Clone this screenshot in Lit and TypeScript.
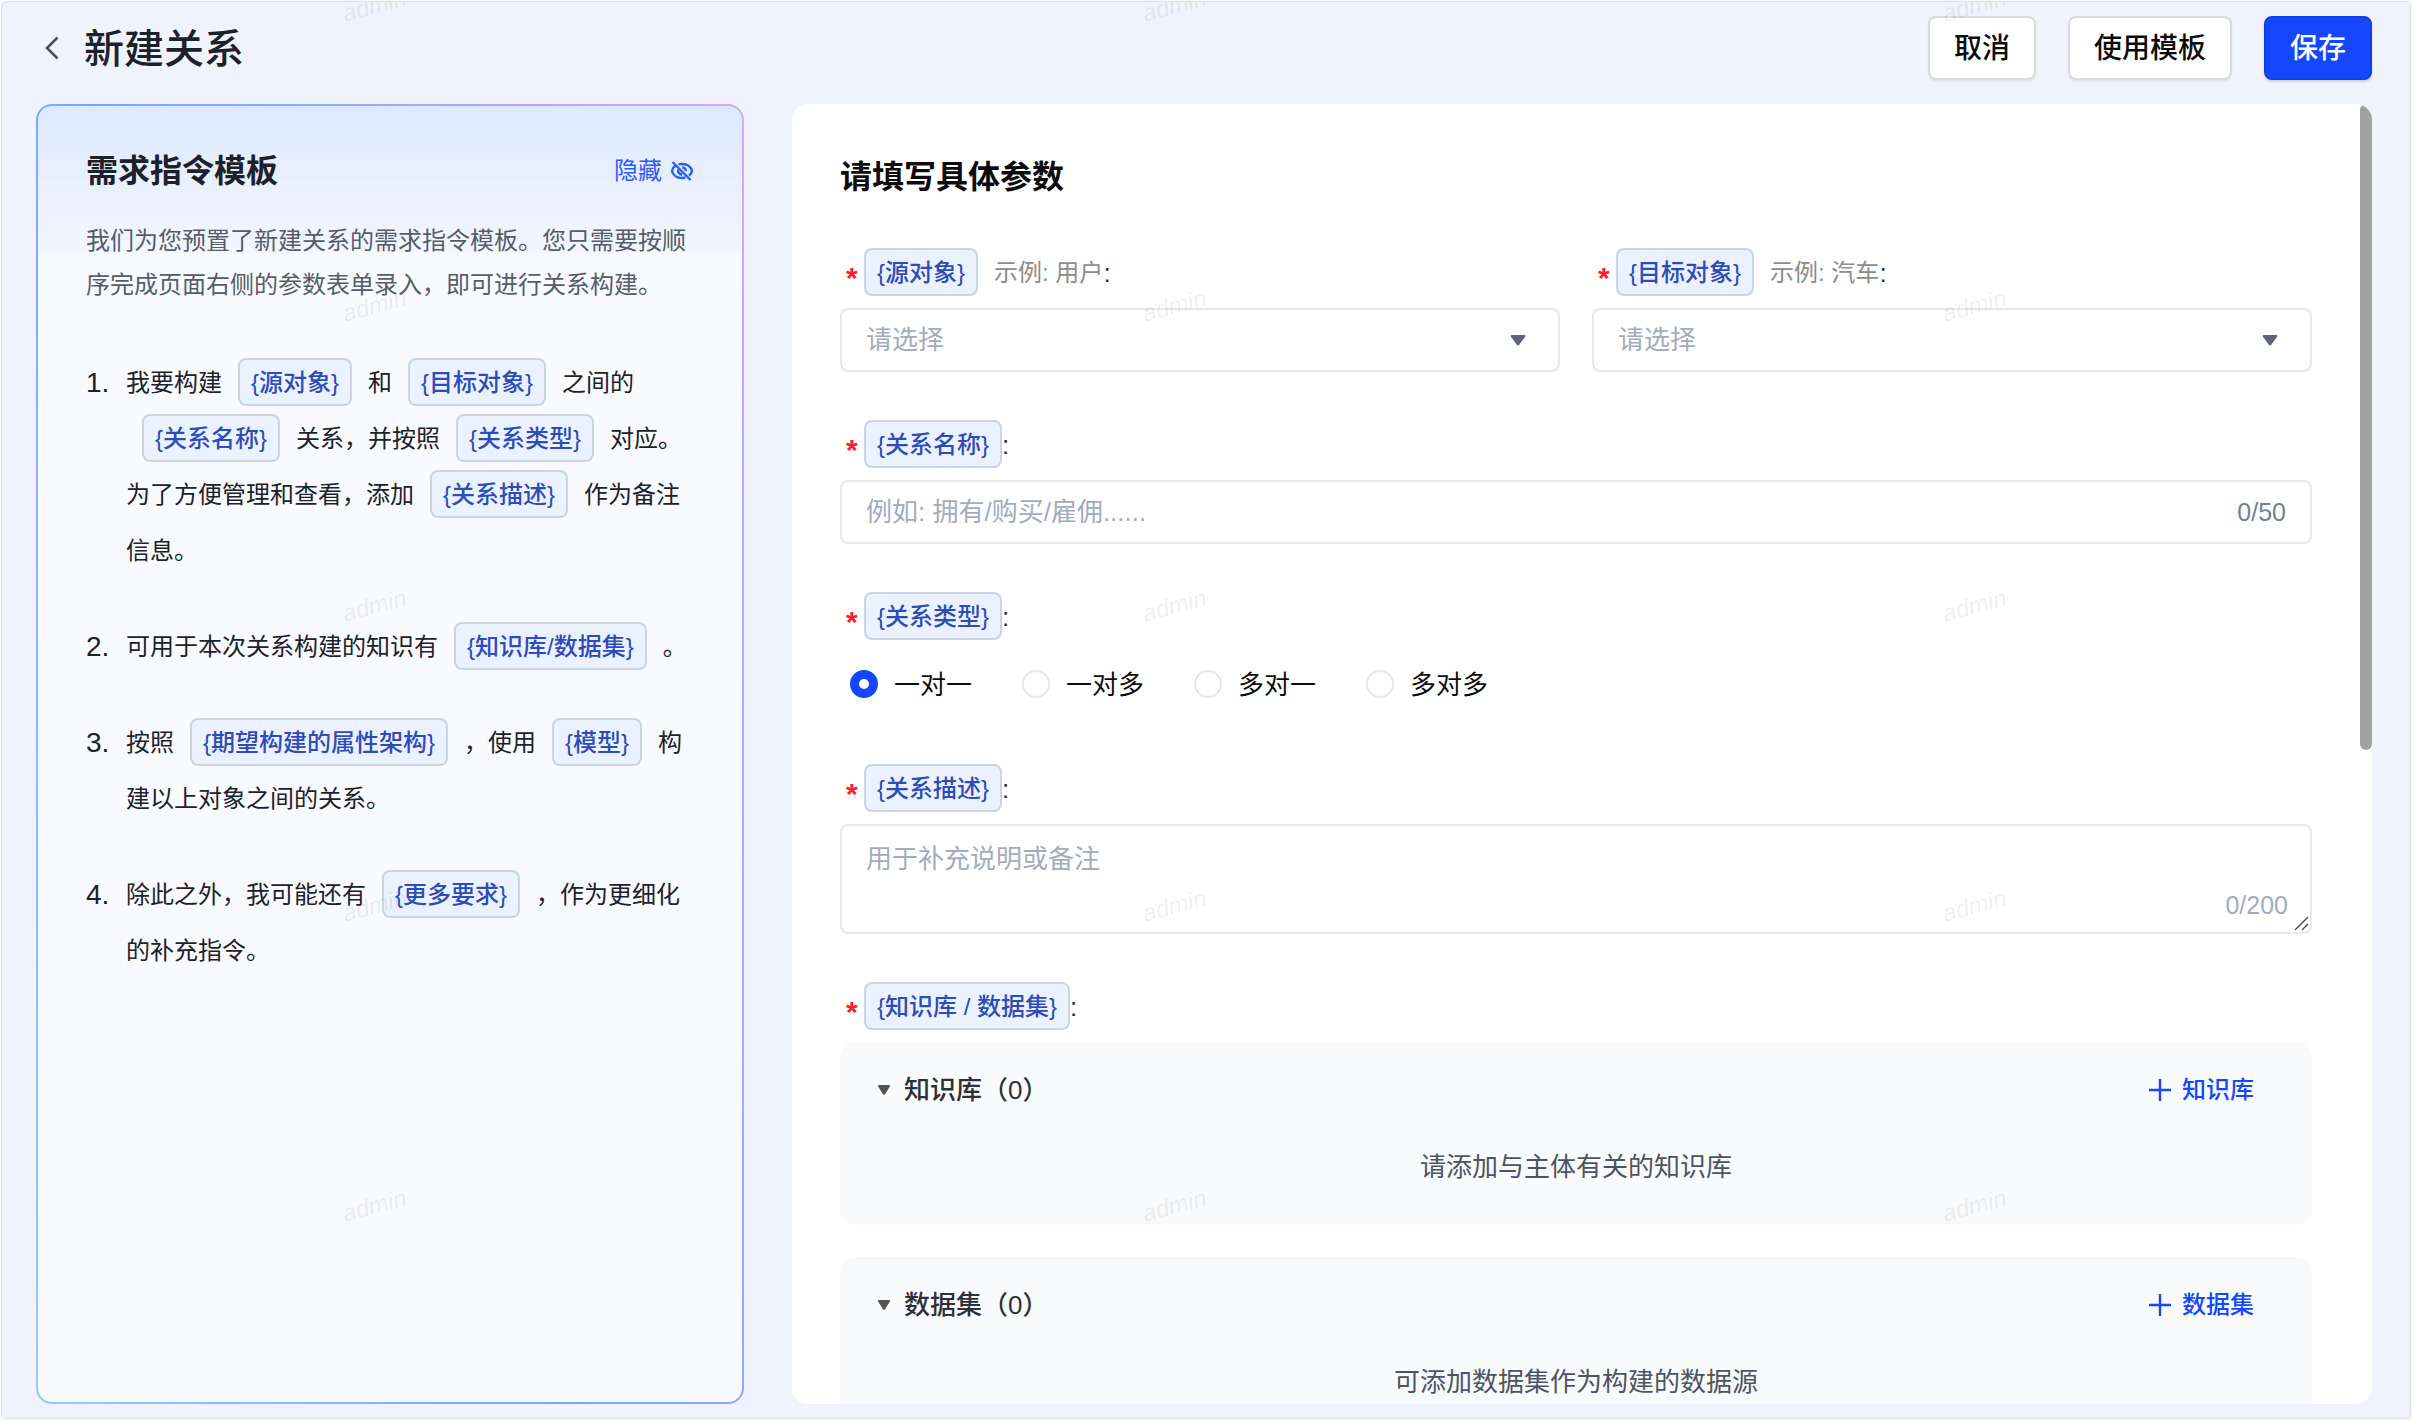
import { LitElement, html, css, svg } from "lit";
import { customElement, property, state } from "lit/decorators.js";

const baseStyles = css`
  * {
    box-sizing: border-box;
  }
  button {
    font: inherit;
    cursor: pointer;
  }
`;

/** Highlighted placeholder such as {源对象}. */
@customElement("param-tag")
export class ParamTag extends LitElement {
  static styles = css`
    :host {
      display: inline-block;
      box-sizing: border-box;
      height: 48px;
      padding: 0 11px;
      border: 2px solid #cbd5e1;
      border-radius: 8px;
      background: #eaf2ff;
      color: #2f4bb8;
      font-size: 24px;
      font-weight: 500;
      line-height: 46px;
      white-space: nowrap;
      vertical-align: top;
    }
  `;
  render() {
    return html`<slot></slot>`;
  }
}

type Part = string | { tag: string };
const t = (tag: string): Part => ({ tag });

const INSTRUCTIONS: Part[][] = [
  [
    "我要构建", t("源对象"), "和", t("目标对象"), "之间的", t("关系名称"),
    "关系，并按照", t("关系类型"), "对应。为了方便管理和查看，添加", t("关系描述"), "作为备注信息。",
  ],
  ["可用于本次关系构建的知识有", t("知识库/数据集"), "。"],
  ["按照", t("期望构建的属性架构"), "，使用", t("模型"), "构建以上对象之间的关系。"],
  ["除此之外，我可能还有", t("更多要求"), "，作为更细化的补充指令。"],
];

@customElement("template-panel")
export class TemplatePanel extends LitElement {
  static styles = [
    baseStyles,
    css`
      :host {
        display: block;
        min-width: 0;
      }
      .card {
        height: 100%;
        padding: 41px 48px 40px 48px;
        border: 2px solid transparent;
        border-radius: 16px;
        background:
          linear-gradient(180deg, #dde9fe 0, #f3f6ff 146px, #f8faff 148px, #f8faff 100%) padding-box,
          linear-gradient(70deg, #9cc5ff 0%, #74a8ff 45%, #d6a6ff 100%) border-box;
      }
      .head {
        display: flex;
        align-items: center;
        justify-content: space-between;
      }
      .title {
        margin: 0;
        font-size: 32px;
        font-weight: 600;
        line-height: 48px;
        color: #1d2129;
      }
      .hide {
        display: flex;
        align-items: center;
        gap: 8px;
        padding: 0;
        border: 0;
        background: none;
        color: #2b5cf6;
        font-size: 24px;
        line-height: 48px;
      }
      .desc {
        margin: 24px 0 48px;
        font-size: 24px;
        line-height: 44px;
        color: #565c69;
      }
      .list {
        display: flex;
        flex-direction: column;
        gap: 40px;
        margin: 0;
        padding: 0;
        list-style: none;
        color: #1d2129;
      }
      .item {
        display: grid;
        grid-template-columns: 40px minmax(0, 1fr);
        line-height: 56px;
      }
      .num {
        font-size: 28px;
      }
      .text {
        font-size: 24px;
      }
      .text param-tag {
        margin: 3px 16px 5px;
      }
    `,
  ];

  render() {
    return html`
      <section class="card">
        <div class="head">
          <h2 class="title">需求指令模板</h2>
          <button class="hide" type="button">
            隐藏
            <svg width="24" height="22" viewBox="0 0 24 22" fill="none" stroke="currentColor" stroke-width="2.4" aria-hidden="true">
              <path d="M2.5 2 20.5 20"></path>
              <path d="M5.5 5.5C3.2 7.2 2.2 9.4 2 11c.8 4 4.7 7 10 7 1.2 0 2.3-.2 3.3-.5"></path>
              <path d="M8.5 4.400c1-.3 2.2-.4 3.5-.4 5.5 0 9.2 3 10 7-.3 1.600-1.3 3.400-3 4.800"></path>
              <path d="M8.2 9.500c-.6 2.600 1 5 4 5.200"></path>
              <path d="M12.2 7.400c2.200.2 3.500 1.500 3.700 3.600"></path>
            </svg>
          </button>
        </div>
        <p class="desc">我们为您预置了新建关系的需求指令模板。您只需要按顺序完成页面右侧的参数表单录入，即可进行关系构建。</p>
        <ol class="list">
          ${INSTRUCTIONS.map(
            (parts, i) => html`<li class="item"><span class="num">${i + 1}.</span><span class="text">${parts.map((p) =>
              typeof p === "string" ? p : html`<param-tag>{${p.tag}}</param-tag>`
            )}</span></li>`
          )}
        </ol>
      </section>
    `;
  }
}

@customElement("source-card")
export class SourceCard extends LitElement {
  @property() name = "";
  @property() empty = "";
  @property({ type: Number }) count = 0;
  @state() private open = true;

  static styles = [
    baseStyles,
    css`
      :host {
        display: block;
        border-radius: 16px;
        background: #f9fafc;
      }
      .head {
        display: flex;
        align-items: center;
        justify-content: space-between;
        height: 96px;
        padding: 0 58px 0 38px;
      }
      .toggle,
      .add {
        display: flex;
        align-items: center;
        padding: 0;
        border: 0;
        background: none;
        font-weight: 500;
        line-height: 40px;
      }
      .toggle {
        gap: 14px;
        font-size: 26px;
        color: #2e3038;
      }
      .add {
        gap: 10px;
        font-size: 24px;
        color: #1447ff;
      }
      .empty {
        margin: 0;
        padding: 9px 0 38px;
        font-size: 26px;
        line-height: 40px;
        text-align: center;
        color: #4e5361;
      }
    `,
  ];

  render() {
    return html`
      <div class="head">
        <button class="toggle" type="button" aria-expanded=${this.open ? "true" : "false"} @click=${() => (this.open = !this.open)}>
          <svg width="12" height="10" viewBox="0 0 12 10" aria-hidden="true">
            <path d="M1 0h10q1.5.3.7 1.700L7 9.300q-1 1-2 0L.3 1.700Q-.5.300 1 0z" fill="#555"></path>
          </svg>
          <span>${this.name}（${this.count}）</span>
        </button>
        <button class="add" type="button">
          <svg width="24" height="24" viewBox="0 0 24 24" stroke="currentColor" stroke-width="2.4" aria-hidden="true">
            <path d="M12 1v22M1 12h22"></path>
          </svg>
          <span>${this.name}</span>
        </button>
      </div>
      ${this.open ? html`<p class="empty">${this.empty}</p>` : ""}
    `;
  }
}

const RELATION_TYPES = ["一对一", "一对多", "多对一", "多对多"];

@customElement("param-form")
export class ParamForm extends LitElement {
  @state() private kind = RELATION_TYPES[0];
  @state() private relName = "";
  @state() private relDesc = "";

  static styles = [
    baseStyles,
    css`
      :host {
        display: block;
        position: relative;
        min-width: 0;
        min-height: 0;
        overflow: hidden;
        border-radius: 16px;
        background: #fff;
      }
      .scroll {
        height: 100%;
        padding: 48px 60px 48px 48px;
        overflow-y: auto;
        scrollbar-width: none;
      }
      .thumb {
        position: absolute;
        top: 0;
        right: 0;
        width: 12px;
        height: 646px;
        border-radius: 6px;
        background: #a2a2a2;
      }
      .title {
        margin: 0 0 46px;
        font-size: 32px;
        font-weight: 600;
        line-height: 50px;
        color: #0c0c0e;
      }
      .form {
        display: flex;
        flex-direction: column;
        gap: 48px;
      }
      .pair {
        display: grid;
        grid-template-columns: 1fr 1fr;
        gap: 32px;
      }
      .field {
        display: flex;
        flex-direction: column;
        gap: 12px;
        min-width: 0;
      }
      .label {
        display: flex;
        height: 48px;
        font-size: 26px;
        line-height: 50px;
        color: #2a2d35;
      }
      .star {
        width: 24px;
        padding: 5px 0 0 6px;
        font-size: 30px;
        font-weight: 700;
        color: #f5222d;
      }
      .hint {
        margin-left: 16px;
        font-size: 24px;
        color: #8c8c8c;
      }
      .box {
        position: relative;
        display: flex;
      }
      .control {
        width: 100%;
        height: 64px;
        margin: 0;
        padding: 0 24px;
        border: 2px solid #e5e8ee;
        border-radius: 8px;
        outline: none;
        background: #fff;
        color: #1d2129;
        font: inherit;
        font-size: 26px;
        line-height: 40px;
        appearance: none;
      }
      select.control {
        color: #a5abba;
      }
      .control::placeholder {
        color: #a5abba;
        opacity: 1;
      }
      textarea.control {
        display: block;
        height: 110px;
        padding: 13px 24px 11px;
        resize: none;
      }
      .caret {
        position: absolute;
        top: 27px;
        right: 34px;
        pointer-events: none;
      }
      .count {
        position: absolute;
        right: 26px;
        top: 12px;
        font-size: 25px;
        line-height: 40px;
        color: #74808f;
      }
      .count.low {
        right: 24px;
        top: auto;
        bottom: 9px;
        color: #a5abba;
      }
      .grip {
        position: absolute;
        right: 3px;
        bottom: 3px;
        pointer-events: none;
      }
      .radios {
        display: flex;
        gap: 50px;
        align-items: center;
        height: 64px;
        padding-left: 10px;
      }
      .radio {
        display: flex;
        align-items: center;
        gap: 16px;
        font-size: 26px;
        line-height: 40px;
        color: #0c0c0e;
      }
      .radio span {
        padding-top: 2px;
      }
      .dot {
        width: 28px;
        height: 28px;
        margin: 0;
        border: 2px solid #e5e8ee;
        border-radius: 50%;
        background: #fff;
        appearance: none;
      }
      .dot:checked {
        border: 9px solid #1447ff;
      }
      .sources {
        display: flex;
        flex-direction: column;
        gap: 32px;
      }
    `,
  ];

  private labelBody(tag: string, hint = "") {
    return html`<span class="star" aria-hidden="true">*</span><param-tag>{${tag}}</param-tag>${hint
        ? html`<span class="hint">${hint}</span>`
        : ""}<span>:</span>`;
  }

  private selectField(id: string, tag: string, hint: string) {
    return html`
      <div class="field">
        <label class="label" for=${id}>${this.labelBody(tag, hint)}</label>
        <div class="box">
          <select class="control" id=${id}>
            <option value="">请选择</option>
          </select>
          <svg class="caret" width="16" height="11" viewBox="0 0 16 11" aria-hidden="true">
            <path d="M1.5 0h13q1.5.3.6 1.800L9 10q-1 1-2 0L.9 1.800Q0 .300 1.500 0z" fill="#5e6475"></path>
          </svg>
        </div>
      </div>
    `;
  }

  render() {
    return html`
      <div class="scroll">
        <h2 class="title">请填写具体参数</h2>
        <form class="form" @submit=${(e: Event) => e.preventDefault()}>
          <div class="pair">
            ${this.selectField("source", "源对象", "示例: 用户")}
            ${this.selectField("target", "目标对象", "示例: 汽车")}
          </div>
          <div class="field">
            <label class="label" for="rel-name">${this.labelBody("关系名称")}</label>
            <div class="box">
              <input
                class="control"
                id="rel-name"
                type="text"
                maxlength="50"
                placeholder="例如: 拥有/购买/雇佣......"
                @input=${(e: Event) => (this.relName = (e.target as HTMLInputElement).value)}
              />
              <span class="count">${this.relName.length}/50</span>
            </div>
          </div>
          <div class="field">
            <div class="label" id="type-label">${this.labelBody("关系类型")}</div>
            <div class="radios" role="radiogroup" aria-labelledby="type-label">
              ${RELATION_TYPES.map(
                (k) => html`<label class="radio">
                  <input
                    class="dot"
                    type="radio"
                    name="kind"
                    .checked=${this.kind === k}
                    @change=${() => (this.kind = k)}
                  />
                  <span>${k}</span>
                </label>`
              )}
            </div>
          </div>
          <div class="field">
            <label class="label" for="rel-desc">${this.labelBody("关系描述")}</label>
            <div class="box">
              <textarea
                class="control"
                id="rel-desc"
                maxlength="200"
                placeholder="用于补充说明或备注"
                @input=${(e: Event) => (this.relDesc = (e.target as HTMLTextAreaElement).value)}
              ></textarea>
              <span class="count low">${this.relDesc.length}/200</span>
              <svg class="grip" width="15" height="15" viewBox="0 0 15 15" stroke="#4a4a4a" stroke-width="1.4" aria-hidden="true">
                <path d="M1 14 14 1M8 14l6-6"></path>
              </svg>
            </div>
          </div>
          <div class="field">
            <div class="label">${this.labelBody("知识库 / 数据集")}</div>
            <div class="sources">
              <source-card name="知识库" empty="请添加与主体有关的知识库"></source-card>
              <source-card name="数据集" empty="可添加数据集作为构建的数据源"></source-card>
            </div>
          </div>
        </form>
      </div>
      <div class="thumb"></div>
    `;
  }
}

/** Repeated user-name watermark laid over the whole page. */
@customElement("page-watermark")
export class PageWatermark extends LitElement {
  static styles = css`
    :host {
      position: absolute;
      inset: 0;
      overflow: hidden;
      pointer-events: none;
    }
    svg {
      display: block;
      width: 100%;
      height: 100%;
    }
    text {
      font-size: 24px;
      font-style: italic;
      fill: rgba(0, 0, 0, 0.07);
    }
  `;
  render() {
    const marks = [];
    for (let row = 0; row < 5; row++) {
      for (let col = 0; col < 3; col++) {
        marks.push(
          svg`<text transform=${`translate(${343 + col * 800} ${20 + row * 300}) rotate(-15)`}>admin</text>`
        );
      }
    }
    return html`<svg aria-hidden="true">${marks}</svg>`;
  }
}

@customElement("app-root")
export class AppRoot extends LitElement {
  static styles = [
    baseStyles,
    css`
      :host {
        display: block;
        height: 100vh;
        padding: 1px;
        box-sizing: border-box;
        background: #f7f8fa;
        font-family: "Liberation Sans", "Noto Sans CJK SC", sans-serif;
        text-spacing-trim: space-all;
      }
      .shell {
        position: relative;
        display: flex;
        flex-direction: column;
        height: 100%;
        border: 1px solid #dfe0e4;
        border-radius: 6px;
        background: #f0f3fc;
        overflow: hidden;
      }
      .top {
        display: flex;
        align-items: center;
        justify-content: space-between;
        padding: 14px 38px 24px 42px;
      }
      .crumb {
        display: flex;
        align-items: center;
        gap: 24px;
      }
      .back {
        display: flex;
        padding: 0;
        border: 0;
        background: none;
        color: #4b4f5b;
      }
      .name {
        margin: 0;
        padding-top: 2px;
        font-size: 40px;
        font-weight: 500;
        line-height: 62px;
        color: #1d2129;
      }
      .actions {
        display: flex;
        gap: 32px;
      }
      .btn {
        height: 64px;
        padding: 2px 24px 0;
        border: 2px solid #dadbdf;
        border-radius: 8px;
        background: #fff;
        box-shadow: 0 2px 2px rgba(0, 0, 0, 0.05);
        color: #0c0c0e;
        font-size: 28px;
        font-weight: 500;
        line-height: 58px;
      }
      .btn.primary {
        border-color: #103fe6;
        background: #1447ff;
        box-shadow: 0 2px 2px rgba(0, 0, 0, 0.14);
        color: #fff;
      }
      .main {
        display: grid;
        flex: 1;
        grid-template-columns: minmax(0, 177fr) minmax(0, 395fr);
        grid-template-rows: minmax(0, 1fr);
        gap: 48px;
        min-height: 0;
        padding: 0 38px 14px 34px;
      }
    `,
  ];

  render() {
    return html`
      <div class="shell">
        <header class="top">
          <div class="crumb">
            <button class="back" type="button" aria-label="返回">
              <svg width="16" height="24" viewBox="0 0 16 24" fill="none" stroke="currentColor" stroke-width="2.5" aria-hidden="true">
                <path d="M13.5 1.500 3 12l10.500 10.500"></path>
              </svg>
            </button>
            <h1 class="name">新建关系</h1>
          </div>
          <div class="actions">
            <button class="btn" type="button">取消</button>
            <button class="btn" type="button">使用模板</button>
            <button class="btn primary" type="button">保存</button>
          </div>
        </header>
        <main class="main">
          <template-panel></template-panel>
          <param-form></param-form>
        </main>
        <page-watermark></page-watermark>
      </div>
    `;
  }
}
